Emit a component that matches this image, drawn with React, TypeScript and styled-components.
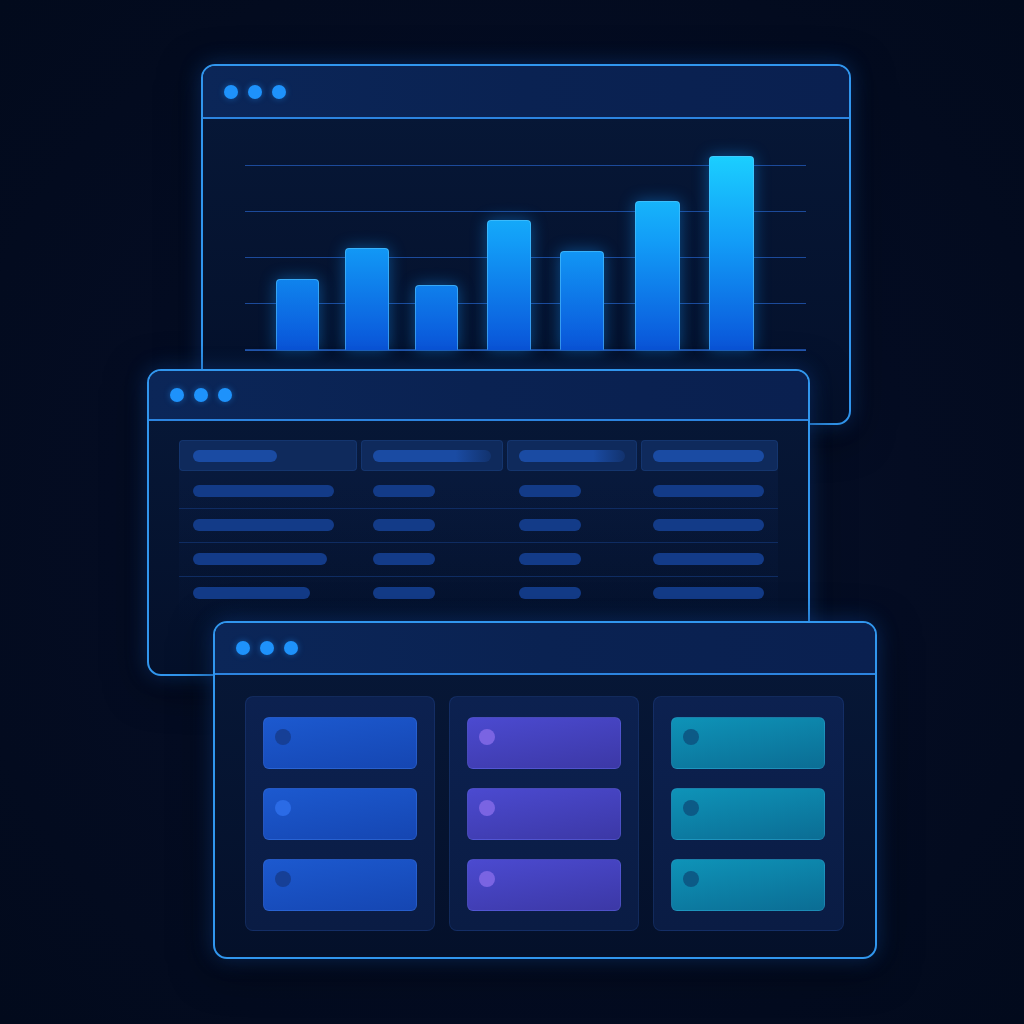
import React from 'react'
import styled, { createGlobalStyle } from 'styled-components'

const GlobalStyle = createGlobalStyle`
  html, body {
    margin: 0;
    padding: 0;
    background: #020a1c;
  }
  * {
    box-sizing: border-box;
  }
`

const Desktop = styled.div`
  position: relative;
  width: 1024px;
  height: 1024px;
  overflow: hidden;
  background: radial-gradient(ellipse at 50% 50%, #07122b 0%, #040c22 55%, #020a1c 100%);
`

const Window = styled.div<{ $x: number; $y: number; $w: number; $h: number; $z: number }>`
  position: absolute;
  left: ${(p) => p.$x}px;
  top: ${(p) => p.$y}px;
  width: ${(p) => p.$w}px;
  height: ${(p) => p.$h}px;
  z-index: ${(p) => p.$z};
  display: flex;
  flex-direction: column;
  border: 2px solid #3196ee;
  border-radius: 14px;
  overflow: hidden;
  background: linear-gradient(180deg, #071838 0%, #04102a 100%);
  box-shadow: 0 0 22px rgba(30, 120, 255, 0.28), 0 10px 40px rgba(0, 0, 0, 0.5);
`

const TitleBar = styled.div<{ $h: number }>`
  flex: none;
  height: ${(p) => p.$h + 2}px;
  display: flex;
  align-items: center;
  gap: 10px;
  padding: 0 0 0 21px;
  border-bottom: 2px solid #2c84e0;
  background: linear-gradient(90deg, #0b2658 0%, #0a2252 50%, #0a2050 100%);
`

const Dot = styled.span`
  width: 14px;
  height: 14px;
  border-radius: 50%;
  background: #1e92fb;
  box-shadow: 0 0 6px rgba(30, 146, 251, 0.45);
`

const Body = styled.div<{ $pt: number; $pl: number }>`
  flex: 1;
  padding: ${(p) => p.$pt}px 0 0 ${(p) => p.$pl}px;
`

/* chart window */

const Chart = styled.div`
  width: 561px;
  height: 186px;
  display: flex;
  align-items: flex-end;
  border-bottom: 1px solid #2358b0;
  background-image: repeating-linear-gradient(
    to bottom,
    #1c4a9a 0px,
    #1c4a9a 1px,
    transparent 1px,
    transparent 46px
  );
`

const Bar = styled.div<{ $h: number; $w: number; $ml: number }>`
  width: ${(p) => p.$w}px;
  height: ${(p) => p.$h}px;
  margin-left: ${(p) => p.$ml}px;
  border-radius: 4px 4px 1px 1px;
  border: 1px solid rgba(90, 200, 255, 0.55);
  border-bottom: none;
  background: linear-gradient(180deg, #1bd0ff 0%, #129cf7 45%, #0a55da 100%);
  background-size: 100% 196px;
  background-position: bottom;
  box-shadow: 0 0 16px rgba(20, 150, 255, 0.45);
`

/* table window */

const Table = styled.div`
  width: 599px;
  padding-bottom: 14px;
  border-radius: 6px;
  background: linear-gradient(180deg, rgba(16, 42, 96, 0.25) 0%, rgba(10, 30, 70, 0.15) 70%, rgba(8, 22, 50, 0) 100%);
`

const HeaderRow = styled.div`
  display: grid;
  grid-template-columns: 178px 142px 130px 137px;
  gap: 4px;
  height: 31px;
  margin-bottom: 4px;
`

const HeaderCell = styled.div`
  display: flex;
  align-items: center;
  padding-left: 11px;
  border-radius: 4px;
  background: #0f2a5c;
  border: 1px solid rgba(60, 120, 220, 0.14);
  &:first-child {
    padding-left: 13px;
  }
`

const Row = styled.div<{ $last?: boolean }>`
  display: grid;
  grid-template-columns: 178px 142px 130px 137px;
  gap: 4px;
  height: 34px;
  align-items: center;
  padding-bottom: 1px;
  border-bottom: ${(p) => (p.$last ? '1px solid transparent' : '1px solid #0f2c62')};
`

const Cell = styled.div`
  display: flex;
  align-items: center;
  padding-left: 12px;
  &:first-child {
    padding-left: 14px;
  }
`

const Pill = styled.span<{ $w: number; $fade?: boolean; $head?: boolean }>`
  display: block;
  width: ${(p) => p.$w}px;
  height: 12px;
  border-radius: 6px;
  background: ${(p) =>
    p.$fade
      ? 'linear-gradient(90deg, #1a4ba3 0%, #1a4ba3 70%, rgba(26, 75, 163, 0.25) 100%)'
      : p.$head
        ? '#1a4ba3'
        : '#133b88'};
`

/* board window */

const Board = styled.div`
  display: grid;
  grid-template-columns: 190px 190px 191px;
  gap: 14px;
`

const Column = styled.div`
  height: 235px;
  display: flex;
  flex-direction: column;
  gap: 19px;
  padding: 20px 0 0 17px;
  border-radius: 8px;
  border: 1px solid rgba(60, 120, 220, 0.16);
  background: linear-gradient(180deg, #0c2150 0%, #0a1c44 100%);
`

const Card = styled.div<{ $from: string; $to: string }>`
  width: 154px;
  height: 52px;
  border-radius: 6px;
  border: 1px solid rgba(140, 180, 255, 0.12);
  background: linear-gradient(170deg, ${(p) => p.$from} 0%, ${(p) => p.$to} 100%);
  padding: 11px 0 0 11px;
`

const CardDot = styled.span<{ $c: string }>`
  display: block;
  width: 16px;
  height: 16px;
  border-radius: 50%;
  background: ${(p) => p.$c};
`

const bars = [
  { h: 71, w: 43, ml: 31 },
  { h: 102, w: 44, ml: 26 },
  { h: 65, w: 43, ml: 26 },
  { h: 130, w: 44, ml: 29 },
  { h: 99, w: 44, ml: 29 },
  { h: 149, w: 45, ml: 31 },
  { h: 194, w: 45, ml: 29 },
]

const rows = [
  [141, 62, 62, 111],
  [141, 62, 62, 111],
  [134, 62, 62, 111],
  [117, 62, 62, 111],
]

const columns = [
  { from: '#1c59cf', to: '#1546b2', dots: ['#163f96', '#2b6be6', '#163f96'] },
  { from: '#4b4ad0', to: '#3c38a6', dots: ['#7a64e2', '#7a64e2', '#7a64e2'] },
  { from: '#0e93b8', to: '#0b6d94', dots: ['#0c5a86', '#0c5a86', '#0c5a86'] },
]

const Dots = ({ h }: { h: number }) => (
  <TitleBar $h={h}>
    <Dot />
    <Dot />
    <Dot />
  </TitleBar>
)

export default function App() {
  return (
    <>
      <GlobalStyle />
      <Desktop>
        <Window $x={201} $y={64} $w={650} $h={361} $z={1}>
          <Dots h={51} />
          <Body $pt={46} $pl={42}>
            <Chart>
              {bars.map((b, i) => (
                <Bar key={i} $h={b.h} $w={b.w} $ml={b.ml} />
              ))}
            </Chart>
          </Body>
        </Window>

        <Window $x={147} $y={369} $w={663} $h={307} $z={2}>
          <Dots h={48} />
          <Body $pt={19} $pl={30}>
            <Table>
              <HeaderRow>
                <HeaderCell>
                  <Pill $w={84} $head />
                </HeaderCell>
                <HeaderCell>
                  <Pill $w={118} $fade />
                </HeaderCell>
                <HeaderCell>
                  <Pill $w={106} $fade />
                </HeaderCell>
                <HeaderCell>
                  <Pill $w={111} $head />
                </HeaderCell>
              </HeaderRow>
              {rows.map((r, i) => (
                <Row key={i} $last={i === rows.length - 1}>
                  {r.map((w, j) => (
                    <Cell key={j}>
                      <Pill $w={w} />
                    </Cell>
                  ))}
                </Row>
              ))}
            </Table>
          </Body>
        </Window>

        <Window $x={213} $y={621} $w={664} $h={338} $z={3}>
          <Dots h={50} />
          <Body $pt={21} $pl={30}>
            <Board>
              {columns.map((c, i) => (
                <Column key={i}>
                  {c.dots.map((d, j) => (
                    <Card key={j} $from={c.from} $to={c.to}>
                      <CardDot $c={d} />
                    </Card>
                  ))}
                </Column>
              ))}
            </Board>
          </Body>
        </Window>
      </Desktop>
    </>
  )
}
